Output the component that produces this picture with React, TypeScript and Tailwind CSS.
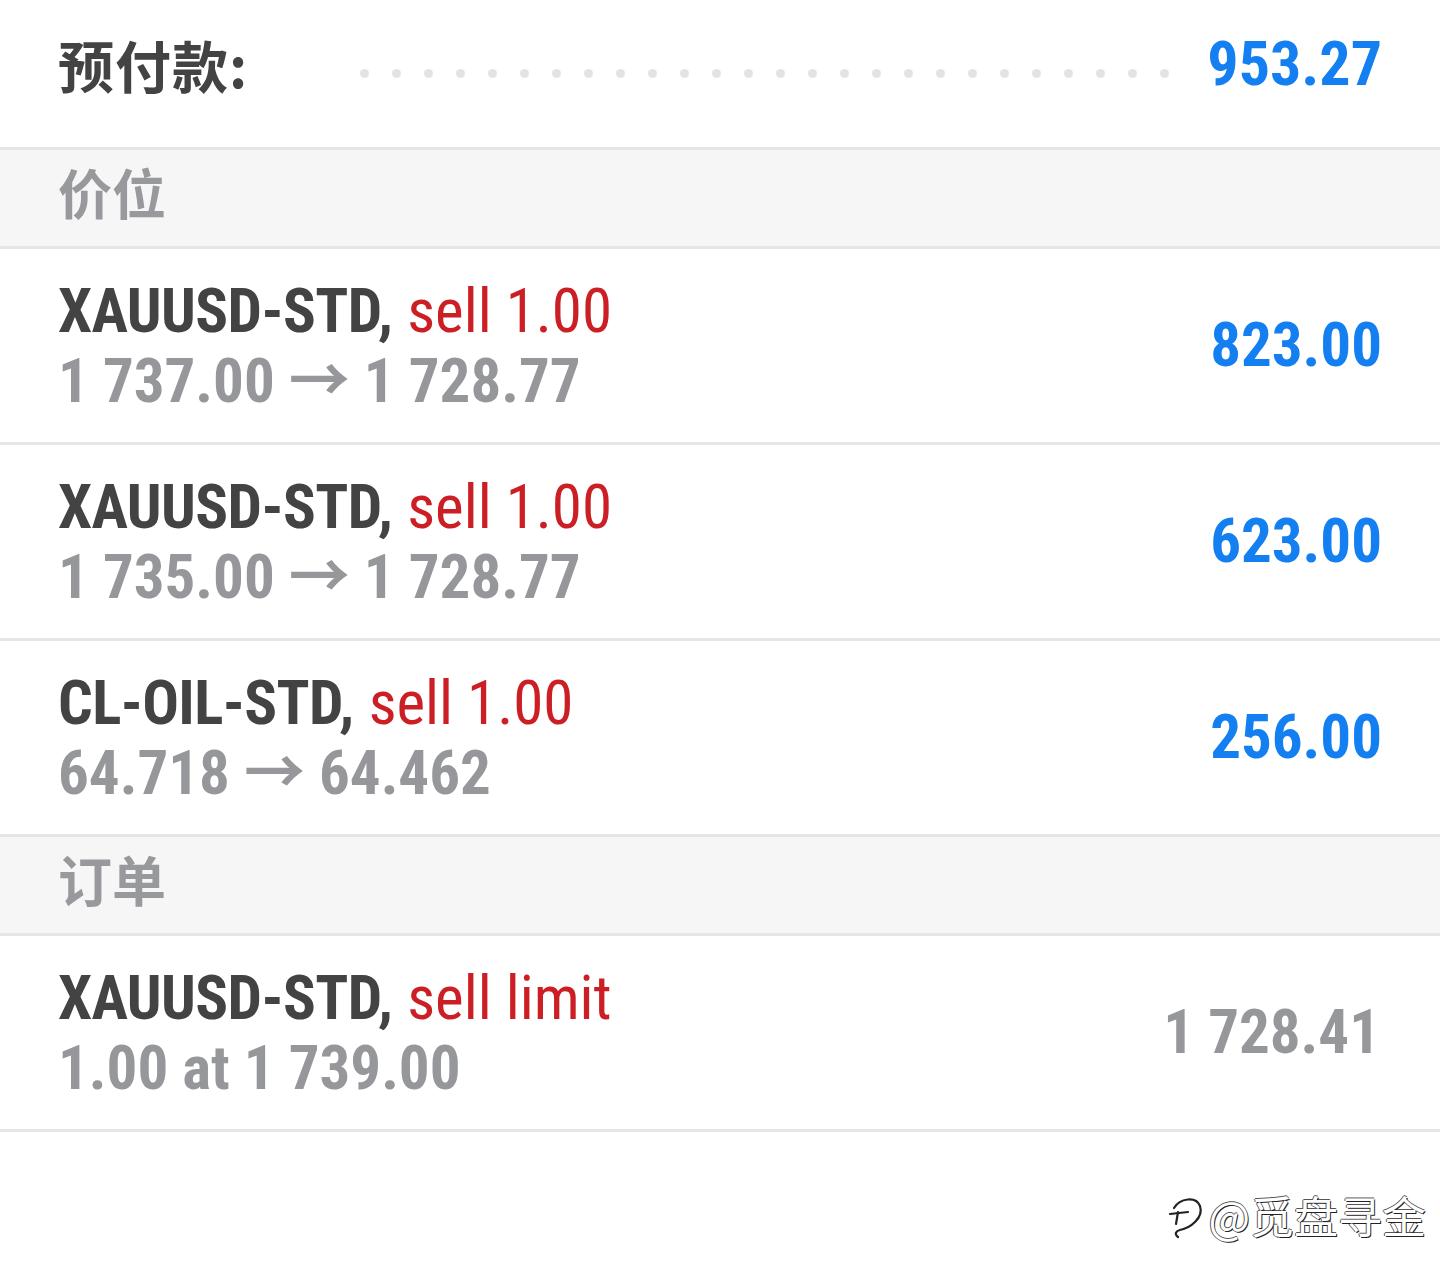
const font = { fontFamily: "'Roboto Condensed', Roboto, 'Noto Sans CJK SC', sans-serif" };

type Position = {
  symbol: string;
  action: string;
  detail: string;
  value: string;
  muted?: boolean;
};

const positions: Position[] = [
  { symbol: "XAUUSD-STD,", action: "sell 1.00", detail: "1 737.00 → 1 728.77", value: "823.00" },
  { symbol: "XAUUSD-STD,", action: "sell 1.00", detail: "1 735.00 → 1 728.77", value: "623.00" },
  { symbol: "CL-OIL-STD,", action: "sell 1.00", detail: "64.718 → 64.462", value: "256.00" },
];

const orders: Position[] = [
  { symbol: "XAUUSD-STD,", action: "sell limit", detail: "1.00 at 1 739.00", value: "1 728.41", muted: true },
];

function Divider() {
  return <div className="h-[3px] w-full bg-[#e6e6e6]" />;
}

function SectionHeader({ title }: { title: string }) {
  return (
    <div className="flex h-[96px] items-center bg-[#f6f6f6] px-[58px] pb-[12px]">
      <span
        className="text-[54px] font-bold leading-none text-[#98999c]"
        style={{ fontFamily: "'Noto Sans CJK SC', sans-serif" }}
      >
        {title}
      </span>
    </div>
  );
}

function Row({ symbol, action, detail, value, muted }: Position) {
  return (
    <div className="flex h-[193px] items-center justify-between pl-[58px] pr-[58px]">
      <div className="flex flex-col text-[61px] leading-[70px]">
        <div className="whitespace-pre">
          <span className="font-bold tracking-[-0.6px] text-[#434343]">{symbol}</span>
          <span className="pl-[1px] font-normal text-[#cc1f25]"> {action}</span>
        </div>
        <div className="whitespace-pre font-bold text-[#96979b]">{detail}</div>
      </div>
      {muted ? (
        <span className="whitespace-pre pr-[2px] text-[61px] font-bold text-[#96979b]">{value}</span>
      ) : (
        <span className="text-[61px] font-bold text-[#137ff0]">{value}</span>
      )}
    </div>
  );
}

function WeiboMark() {
  return (
    <svg width="40" height="50" viewBox="0 0 40 50" fill="none" stroke="#222" strokeWidth="2.2" strokeLinecap="round">
      <path d="M8 18 C14 8 30 6 34 16 C38 28 24 38 14 40 C10 41 8 44 12 47" />
      <path d="M4 24 L22 22" />
      <path d="M12 22 L10 34" />
    </svg>
  );
}

export default function App() {
  return (
    <div className="relative h-[1285px] w-[1440px] overflow-hidden bg-white" style={font}>
      <div className="flex h-[147px] items-center pb-[20px] pl-[58px] pr-[58px]">
        <span
          className="text-[56px] font-bold leading-none tracking-[1px] text-[#434343]"
          style={{ fontFamily: "'Noto Sans CJK SC', sans-serif" }}
        >
          预付款:
        </span>
        <div className="ml-[112px] mt-[20px] flex flex-1 gap-[23px]">
          {Array.from({ length: 26 }).map((_, i) => (
            <span key={i} className="h-[9px] w-[9px] rounded-full bg-[#e3e3e3]" />
          ))}
        </div>
        <span className="text-[62px] font-bold leading-none text-[#137ff0]">953.27</span>
      </div>
      <Divider />
      <SectionHeader title="价位" />
      <Divider />
      {positions.map((p, i) => (
        <div key={i}>
          <Row {...p} />
          <Divider />
        </div>
      ))}
      <SectionHeader title="订单" />
      <Divider />
      {orders.map((o, i) => (
        <div key={i}>
          <Row {...o} />
          <Divider />
        </div>
      ))}
      <div className="absolute bottom-[45px] right-[14px] flex items-center gap-[2px]">
        <WeiboMark />
        <span
          className="text-[44px] leading-none text-white"
          style={{
            fontFamily: "'Noto Sans CJK SC', sans-serif",
            textShadow: "1px 1px 0 #222, -1px 0 0 #555, 0 -1px 0 #555",
          }}
        >
          @觅盘寻金
        </span>
      </div>
    </div>
  );
}
